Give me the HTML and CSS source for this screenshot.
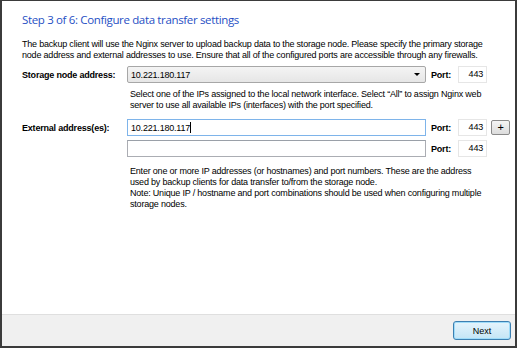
FILE: index.html
```html
<!DOCTYPE html>
<html>
<head>
<meta charset="utf-8">
<link rel="stylesheet" href="styles.css">
</head>
<body>
<div class="window">
  <div class="content">
    <h1 class="title">Step 3 of 6: Configure data transfer settings</h1>
    <p class="intro">The backup client will use the Nginx server to upload backup data to the storage node. Please specify the primary storage node address and external addresses to use. Ensure that all of the configured ports are accessible through any firewalls.</p>

    <div class="row row-storage">
      <div class="label">Storage node address:</div>
      <div class="combo"><span class="combo-text">10.221.180.117</span><span class="combo-arrow"></span></div>
      <div class="port-label">Port:</div>
      <div class="port">443</div>
    </div>
    <p class="help help-storage">Select one of the IPs assigned to the local network interface. Select “All” to assign Nginx web server to use all available IPs (interfaces) with the port specified.</p>

    <div class="row row-ext">
      <div class="label">External address(es):</div>
      <div class="input focused"><span>10.221.180.117</span><span class="caret"></span></div>
      <div class="port-label">Port:</div>
      <div class="port">443</div>
      <div class="plus">+</div>
    </div>
    <div class="row row-ext2">
      <div class="label"></div>
      <div class="input"></div>
      <div class="port-label">Port:</div>
      <div class="port">443</div>
    </div>
    <p class="help help-ext">Enter one or more IP addresses (or hostnames) and port numbers. These are the address used by backup clients for data transfer to/from the storage node.<br>Note: Unique IP / hostname and port combinations should be used when configuring multiple storage nodes.</p>
  </div>
  <div class="footer">
    <button class="next">Next</button>
  </div>
</div>
</body>
</html>
```

FILE: styles.css
```css
* { box-sizing: border-box; }
html, body { margin: 0; padding: 0; background: #ffffff; }
body {
  font-family: "Liberation Sans", Arial, sans-serif;
  font-size: 9px;
  letter-spacing: -0.2px;
  color: #000;
}
.window {
  width: 517px;
  height: 348px;
  border-style: solid;
  border-color: #3b3b3b;
  border-width: 1px 2px 2px 2px;
  display: flex;
  flex-direction: column;
  background: #fff;
}
.content {
  flex: 1;
  padding: 10px 20px 0 20px;
}
.title {
  margin: 0;
  font-family: "Open Sans", sans-serif;
  font-weight: normal;
  font-size: 11.5px;
  letter-spacing: -0.35px;
  line-height: 18px;
  color: #1f4fc4;
}
.intro {
  margin: 10px 0 0 0;
  line-height: 11px;
}
.row {
  display: flex;
  align-items: center;
  height: 17px;
}
.row > * { flex-shrink: 0; }
.row-storage { margin-top: 5px; }
.row-ext { margin-top: 8px; }
.row-ext2 { margin-top: 4px; }
.label {
  width: 105px;
  font-weight: bold;
  white-space: nowrap;
}
.combo {
  width: 299px;
  height: 17px;
  border: 1px solid #a7a7a7;
  border-radius: 2px;
  background: linear-gradient(#f4f4f4, #e6e6e6);
  display: flex;
  align-items: center;
  justify-content: space-between;
  padding: 0 5px 0 3px;
}
.combo-arrow {
  width: 0; height: 0;
  border-left: 3px solid transparent;
  border-right: 3px solid transparent;
  border-top: 3px solid #000;
}
.input {
  width: 299px;
  height: 17px;
  border: 1px solid #abadb3;
  border-top-color: #9aa0a8;
  background: #fff;
  display: flex;
  align-items: center;
  padding-left: 3px;
}
.input.focused { border-color: #7eb4ea; }
.caret {
  display: inline-block;
  width: 1px;
  height: 11px;
  background: #000;
}
.port-label {
  font-weight: bold;
  margin-left: 5px;
  width: 27px;
}
.port {
  width: 29px;
  height: 17px;
  border: 1px solid #e6e6e6;
  text-align: right;
  line-height: 15px;
  padding-right: 3px;
}
.plus {
  margin-left: 4px;
  width: 19px;
  height: 15px;
  border: 1px solid #8a8a8a;
  border-radius: 2px;
  background: linear-gradient(#f5f5f5, #dcdcdc);
  text-align: center;
  line-height: 12px;
  font-size: 11px;
}
.help {
  margin: 0 0 0 108px;
  line-height: 11px;
  width: 362px;
}
.help-storage { margin-top: 6px; }
.help-ext { margin-top: 9px; }
.footer {
  height: 32px;
  background: #f0f0f0;
  border-top: 1px solid #dfdfdf;
  display: flex;
  justify-content: flex-end;
  align-items: center;
  padding-right: 4px;
}
.next {
  width: 58px;
  height: 19px;
  border: 1px solid #3c7fb1;
  border-radius: 3px;
  background: linear-gradient(#e5f4fc, #c4e5f6);
  box-shadow: inset 0 0 0 1px #9fdcf9;
  font-family: "Liberation Sans", Arial, sans-serif;
  font-size: 9px;
  letter-spacing: 0;
  color: #000;
  padding: 0;
}
```
